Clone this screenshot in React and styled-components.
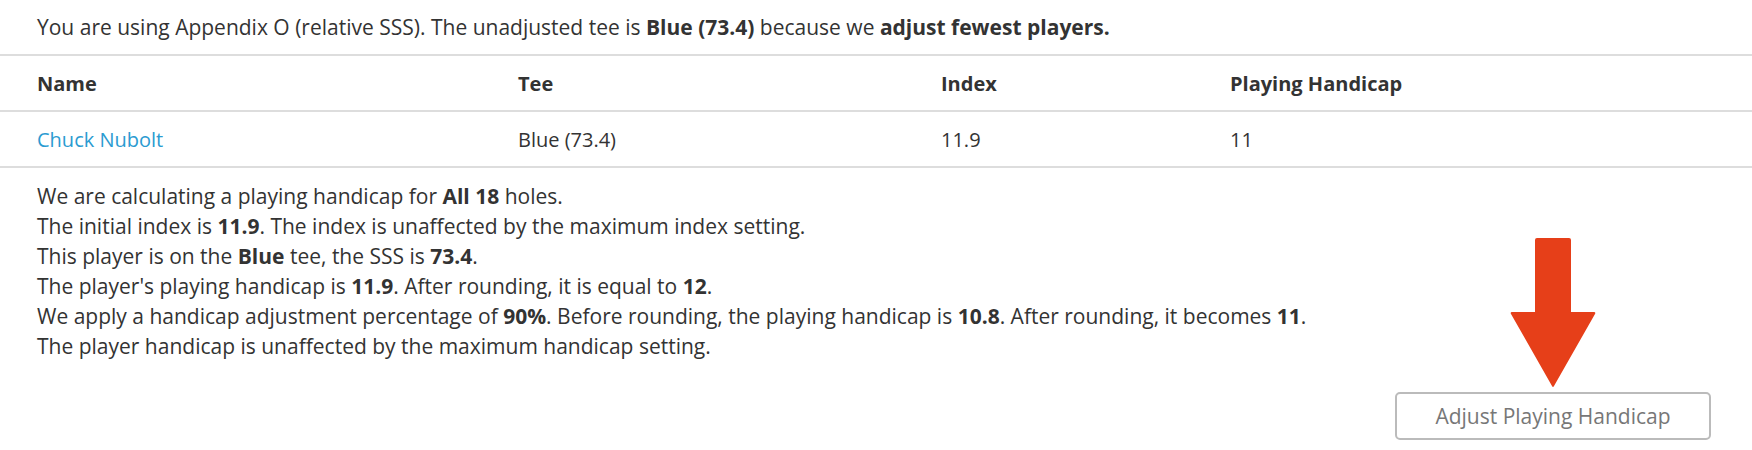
import React from 'react';
import styled, { createGlobalStyle } from 'styled-components';

const GlobalStyle = createGlobalStyle`
    body {
        margin: 0;
        background: #fff;
        font-family: 'Open Sans', 'Liberation Sans', sans-serif;
        color: #333;
    }
`;

const Page = styled.div`
    width: 1752px;
    height: 450px;
    overflow: hidden;
`;

const Intro = styled.p`
    margin: 0;
    padding: 0 37px;
    height: 54px;
    line-height: 54px;
    font-size: 21px;
`;

const Table = styled.div`
    border-top: 2px solid #ddd;
`;

const Row = styled.div`
    display: grid;
    grid-template-columns: 518px 423px 289px 1fr;
    height: 54px;
    align-items: center;
    border-bottom: 2px solid #ddd;
    font-size: 20px;
    font-weight: ${props => (props.head ? 700 : 400)};
`;

const Cell = styled.div`
    padding-left: ${props => (props.first ? '37px' : '0')};
`;

const NameLink = styled.a`
    color: #2b9bd1;
    text-decoration: none;
`;

const Notes = styled.div`
    padding: 13px 37px 0;
    font-size: 21px;
    line-height: 30px;
`;

const Footer = styled.div`
    display: flex;
    justify-content: flex-end;
    padding: 31px 41px 0 0;
`;

const ButtonWrap = styled.div`
    position: relative;
`;

const Button = styled.button`
    width: 316px;
    height: 48px;
    border: 2px solid #bbb;
    border-radius: 5px;
    background: #fff;
    color: #777;
    font-family: 'Open Sans', 'Liberation Sans', sans-serif;
    font-size: 21px;
    cursor: pointer;
`;

const Arrow = styled.svg`
    position: absolute;
    left: 50%;
    bottom: 100%;
    margin-bottom: 4px;
    transform: translateX(-50%);
`;

const App = () => {
    return (
        <Page>
            <GlobalStyle />
            <Intro>
                You are using Appendix O (relative SSS). The unadjusted tee is <b>Blue (73.4)</b> because we <b>adjust fewest players.</b>
            </Intro>

            <Table>
                <Row head>
                    <Cell first>Name</Cell>
                    <Cell>Tee</Cell>
                    <Cell>Index</Cell>
                    <Cell>Playing Handicap</Cell>
                </Row>
                <Row>
                    <Cell first><NameLink href="#">Chuck Nubolt</NameLink></Cell>
                    <Cell>Blue (73.4)</Cell>
                    <Cell>11.9</Cell>
                    <Cell>11</Cell>
                </Row>
            </Table>

            <Notes>
                <div>We are calculating a playing handicap for <b>All 18</b> holes.</div>
                <div>The initial index is <b>11.9</b>. The index is unaffected by the maximum index setting.</div>
                <div>This player is on the <b>Blue</b> tee, the SSS is <b>73.4</b>.</div>
                <div>The player's playing handicap is <b>11.9</b>. After rounding, it is equal to <b>12</b>.</div>
                <div>We apply a handicap adjustment percentage of <b>90%</b>. Before rounding, the playing handicap is <b>10.8</b>. After rounding, it becomes <b>11</b>.</div>
                <div>The player handicap is unaffected by the maximum handicap setting.</div>
            </Notes>

            <Footer>
                <ButtonWrap>
                    <Arrow width="86" height="150" viewBox="0 0 86 150">
                        <path
                            d="M25 2 Q25 0 27 0 L59 0 Q61 0 61 2 L61 74 L84 74 Q86 74 85 76 L44 148 Q43 150 42 148 L1 76 Q0 74 2 74 L25 74 Z"
                            fill="#e63f19"
                        />
                    </Arrow>
                    <Button>Adjust Playing Handicap</Button>
                </ButtonWrap>
            </Footer>
        </Page>
    );
};

export default App;
